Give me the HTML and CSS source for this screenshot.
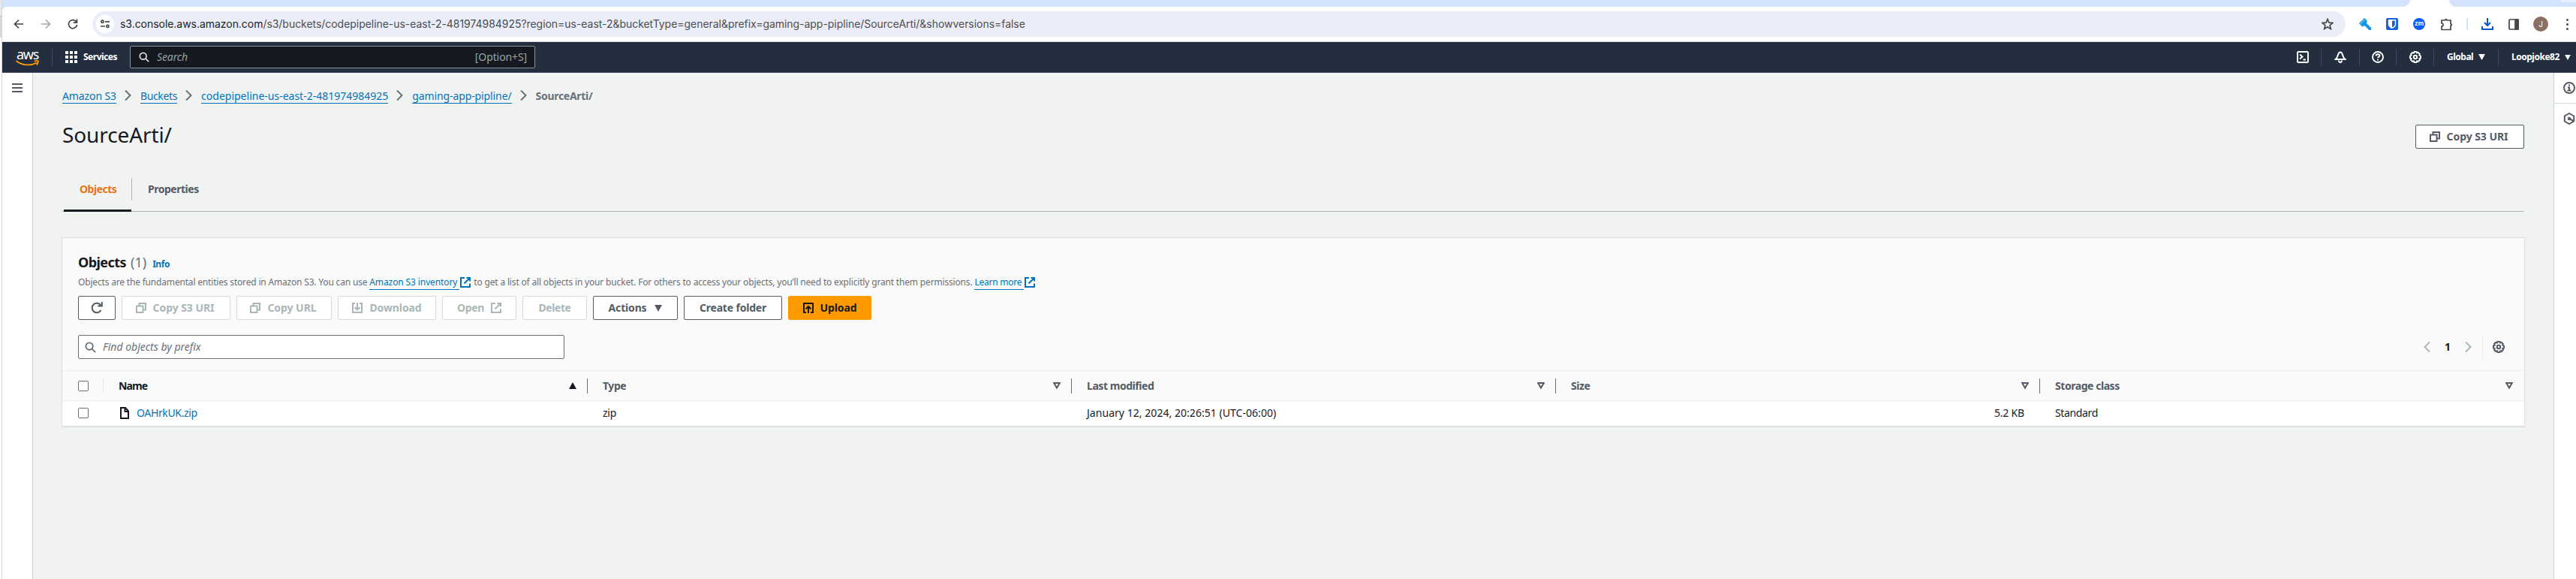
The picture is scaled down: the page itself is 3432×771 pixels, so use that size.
FILE: index.html
```html
<!DOCTYPE html>
<html lang="en">
<head>
<meta charset="utf-8">
<title>SourceArti/ - S3 bucket</title>
<link rel="stylesheet" href="styles.css">
</head>
<body>
<svg class="defs" aria-hidden="true">
  <symbol id="copy" viewBox="0 0 14 14"><path d="M1 4.500h8.500V13H1zM4.500 4V1H13v8.500h-3" /></symbol>
  <symbol id="ext" viewBox="0 0 14 14"><path d="M6 1H1v12h12V8.500M8.500 1H13v4.500M13 1 5.500 8.500" /></symbol>
  <symbol id="chev" viewBox="0 0 9 14"><path d="M1 .5 7.500 7 1 13.500" /></symbol>
  <symbol id="mag" viewBox="0 0 16 16"><circle cx="6.500" cy="6.500" r="5" /><path d="m10.300 10.300 4.700 4.700" /></symbol>
  <symbol id="gear" viewBox="0 0 16 16"><path d="M6.500 1h3l.5 1.500 1.700-.6 2.100 2.100-.6 1.500L15 6.500v3l-1.700.6.7 1.700-2.100 2.200-1.800-.7-.6 1.700h-3l-.6-1.700-1.700.7L2 11.800l.7-1.700L1 9.500v-3l1.700-.8L2 4.100 4.200 2l1.700.6z" /><circle cx="8" cy="8" r="2.200" /></symbol>
  <symbol id="tri" viewBox="0 0 10 9"><path d="M1.200 1h7.600L5 7.500z" /></symbol>
  <symbol id="down" viewBox="0 0 10 9"><path d="M0 0h10L5 9z" /></symbol>
</svg>
<div class="screen">
  <div class="edge"><i></i><b></b></div>
  <div class="window">
    <div class="tabstrip"><span class="strip-a"></span><span class="strip-b"><i></i></span></div>
    <div class="toolbar">
      <div class="history">
        <svg width="14" height="14" viewBox="0 0 14 14" class="ink"><path d="M13 7H1.500M7 1.500 1.500 7 7 12.500" /></svg>
        <svg width="14" height="14" viewBox="0 0 14 14" class="ink dim"><path d="M1 7h11.500M7 1.500 12.500 7 7 12.500" /></svg>
        <svg width="14" height="14" viewBox="0 0 14 14" class="ink"><path d="M12 4.500A5.600 5.600 0 1 0 12.600 8M12.500.5v4.700H7.800" /></svg>
      </div>
      <div class="omnibox">
        <span class="site"><svg width="12" height="12" viewBox="0 0 12 12" class="ink"><circle cx="2.500" cy="2.800" r="1.600" /><path d="M6 2.800h6M0 9h6" /><circle cx="9.500" cy="9" r="1.600" /></svg></span>
        <span class="url"><em>s3.console.aws.amazon.com</em>/s3/buckets/codepipeline-us-east-2-481974984925?region=us-east-2&amp;bucketType=general&amp;prefix=gaming-app-pipline/SourceArti/&amp;showversions=false</span>
        <svg class="ink star" width="16" height="16" viewBox="0 0 16 16"><path d="m8 1.500 1.900 4.600 5 .4-3.800 3.200 1.200 4.800L8 12l-4.300 2.500 1.200-4.800L1.100 6.500l5-.4z" /></svg>
      </div>
      <div class="extensions">
        <svg class="flat" width="16" height="16" viewBox="0 0 16 16"><path d="M7 0 0 7l4 4.500 3.500-1.200L13.500 16H16v-3L10 7.200 10.500 3z" fill="#1494f0" /><path d="m7 0-7 7 2 2.200L9 2z" fill="#4bb0dc" /></svg>
        <svg class="flat" width="16" height="16" viewBox="0 0 16 16"><rect width="16" height="16" rx="2" fill="#175ddc" /><path d="M2.800 2h10.400v6.500c0 2.600-2.700 4.600-5.200 5.600-2.500-1-5.200-3-5.200-5.600z" fill="#fff" /><path d="M8 3.500h3.700v5c0 1.600-1.800 3-3.700 3.900z" fill="#175ddc" /></svg>
        <span class="zm">zm</span>
        <svg width="17" height="17" viewBox="0 0 17 17" class="ink"><path d="M2 3h4.500a1.300 1.300 0 1 1 2.600 0H14v4.700a1.300 1.300 0 1 1 0 2.600V15.500H2V11a2 2 0 0 0 0-4z" /></svg>
        <i class="bar"></i>
        <svg width="16" height="16" viewBox="0 0 16 16" class="ink blue"><path d="M8 0v9.500M4 6l4 4 4-4M1 11v4h14v-4" /></svg>
        <svg width="14" height="15" viewBox="0 0 14 15" class="ink"><rect x="1" y="1" width="12" height="13" rx="1" /><path d="M9 1h4v13H9z" fill="#474747" /></svg>
        <span class="avatar">J</span>
        <span class="dots"><i></i><i></i><i></i></span>
      </div>
    </div>
    <div class="nav">
      <div class="logo"><span>aws</span><svg width="31" height="8" viewBox="0 0 31 8"><path d="M.5 1C8 7.500 20 8 28 3.500M24.500 1.500c3-.8 6-.8 5.300.5-.2 1.500-1 3.500-2 4.500" /></svg></div>
      <div class="services"><svg width="16" height="16" viewBox="0 0 16 16"><path d="M0 0h4v4H0zM6 0h4v4H6zM12 0h4v4h-4zM0 6h4v4H0zM6 6h4v4H6zM12 6h4v4h-4zM0 12h4v4H0zM6 12h4v4H6zM12 12h4v4h-4z" /></svg><span>Services</span></div>
      <div class="navsearch"><svg width="14" height="14"><use href="#mag" /></svg><span class="ph k10">Search</span><span class="key k10">[Option+S]</span></div>
      <div class="utils">
        <span class="u u1"><svg width="16" height="16" viewBox="0 0 16 16"><rect x="1" y="1" width="14" height="14" rx="1" /><path d="m4 4.500 3.500 3L4 10.500M8.500 11.500H12" /></svg></span>
        <span class="u u2"><svg width="16" height="16" viewBox="0 0 16 16"><path d="M1.500 11h13C11.500 8.500 12 7 11 5 10.500 3 9 1.500 8 1.500S5.500 3 5 5c-1 2-.5 3.500-3.500 6zM6 12.500C6 14 7 15 8 15s2-1 2-2.500" /></svg></span>
        <span class="u u3"><svg width="16" height="16" viewBox="0 0 16 16"><circle cx="8" cy="8" r="7" /><path d="M5.600 6.500C5.600 5 6.700 4.300 8 4.300s2.400.8 2.400 2C10.400 7.800 8 7.800 8 9.300M8 10.700v1.800" /></svg></span>
        <span class="u u4"><svg width="16" height="16"><use href="#gear" /></svg></span>
        <span class="u u5"><span>Global</span><svg width="9" height="8"><use href="#down" /></svg></span>
        <span class="u u6"><span>Loopjoke82</span><svg width="8" height="7"><use href="#down" /></svg></span>
      </div>
    </div>
    <div class="body">
      <div class="left"><i></i><i></i><i></i></div>
      <main>
        <div class="crumbs">
          <a class="k10">Amazon S3</a><svg><use href="#chev" /></svg><a class="k35">Buckets</a><svg><use href="#chev" /></svg><a>codepipeline-us-east-2-481974984925</a><svg><use href="#chev" /></svg><a class="k10">gaming-app-pipline/</a><svg><use href="#chev" /></svg><b class="k30">SourceArti/</b>
        </div>
        <div class="title"><h1 class="k10">SourceArti/</h1><button class="btn w145"><svg><use href="#copy" /></svg><span class="k05">Copy S3 URI</span></button></div>
        <div class="tabs"><span class="tab on">Objects</span><i></i><span class="tab">Properties</span></div>
        <section class="card">
          <div class="head">
            <div class="h2"><b class="k55">Objects</b><span class="count">(1)</span><a class="k40">Info</a></div>
            <p><span class="k18">Objects are the fundamental entities stored in Amazon S3. You can use</span><a class="x k10">Amazon S3 inventory</a><svg><use href="#ext" /></svg><span class="k17">to get a list of all objects in your bucket. For others to access your objects, you’ll need to explicitly grant them permissions.</span><a class="x k23">Learn more</a><svg><use href="#ext" /></svg></p>
            <div class="actions">
              <button class="btn w50"><svg class="refresh" viewBox="0 0 16 16"><path d="M13.500 11A6.300 6.300 0 1 1 13.500 5M14.800 0v5.500H9.300" /></svg></button>
              <button class="btn off w145"><svg><use href="#copy" /></svg><span class="k05">Copy S3 URI</span></button>
              <button class="btn off w127"><svg><use href="#copy" /></svg><span class="k05">Copy URL</span></button>
              <button class="btn off w131"><svg viewBox="0 0 14 14"><path d="M4 1H1v12h12V1h-3M7 0v9.500M3.500 6 7 9.500 10.500 6" /></svg><span class="k10">Download</span></button>
              <button class="btn off w99"><span class="k35">Open</span><svg><use href="#ext" /></svg></button>
              <button class="btn off w86"><span class="k40">Delete</span></button>
              <button class="btn w113"><span class="k17">Actions</span><svg class="caret"><use href="#down" /></svg></button>
              <button class="btn w131"><span class="k18">Create folder</span></button>
              <button class="btn primary w111"><svg viewBox="0 0 14 14"><path d="M4 13H1V1h12v12h-3M7 14V5M3.500 8.500 7 5l3.500 3.500" /></svg><span class="k10">Upload</span></button>
            </div>
            <div class="filter">
              <div class="input"><svg width="15" height="15"><use href="#mag" /></svg><span>Find objects by prefix</span></div>
              <div class="pages"><svg class="chev flip"><use href="#chev" /></svg><b>1</b><svg class="chev"><use href="#chev" /></svg><i></i><svg class="cog"><use href="#gear" /></svg></div>
            </div>
          </div>
          <div class="row th">
            <span class="cell cb"><i class="box"></i></span>
            <span class="cell name"><b>Name</b><svg class="up" viewBox="0 0 10 9"><path d="M0 9h10L5 0z" /></svg></span>
            <span class="cell"><b>Type</b><svg><use href="#tri" /></svg></span>
            <span class="cell"><b>Last modified</b><svg><use href="#tri" /></svg></span>
            <span class="cell"><b>Size</b><svg><use href="#tri" /></svg></span>
            <span class="cell"><b>Storage class</b><svg><use href="#tri" /></svg></span>
          </div>
          <div class="row td">
            <span class="cell cb"><i class="box"></i></span>
            <span class="cell"><svg class="file" viewBox="0 0 12 16"><path d="M1 1h6l4 4.500V15H1zM6.500 1v5H11" /></svg><a class="k35">OAHrkUK.zip</a></span>
            <span class="cell"><span class="k23">zip</span></span>
            <span class="cell"><span class="wide">January 12, 2024, 20:26:51 (UTC-06:00)</span></span>
            <span class="cell right"><span class="k18">5.2 KB</span></span>
            <span class="cell"><span class="k35">Standard</span></span>
          </div>
        </section>
      </main>
      <div class="rightp">
        <span class="r1"><svg width="16" height="16" viewBox="0 0 16 16"><circle cx="8" cy="8" r="7" /><path d="M8 3.500v2M6 7.500h2v4M5.500 11.500h5" /></svg></span>
        <span class="r2"><svg width="16" height="16" viewBox="0 0 16 16"><path d="m8 1 6.200 3.500v7L8 15l-6.200-3.500v-7z" /><circle cx="8" cy="8" r="1.300" /><path d="m8 8 5.500 3" /></svg></span>
      </div>
    </div>
  </div>
</div>
</body>
</html>
```
FILE: styles.css
```css
* { box-sizing: border-box; }
body { margin: 0; font-family: "Noto Sans", "Open Sans", sans-serif; font-size: 14px; line-height: 22px; color: #16191f; }
.defs { position: absolute; width: 0; height: 0; }
svg { display: block; flex: none; fill: none; stroke: currentColor; stroke-width: 2; }
.flat { stroke: none; }

/* tracking steps, in hundredths of a pixel */
.k05 { letter-spacing: -0.05px; }
.k10 { letter-spacing: -0.11px; }
.k17 { letter-spacing: -0.17px; }
.k18 { letter-spacing: -0.18px; }
.k23 { letter-spacing: -0.24px; }
.k30 { letter-spacing: -0.29px; }
.k35 { letter-spacing: -0.35px; }
.k40 { letter-spacing: -0.42px; }
.k55 { letter-spacing: -0.55px; }
.wide { letter-spacing: 0.04px; }

.screen { display: flex; width: 3432px; height: 771px; overflow: hidden; }
.edge { width: 3px; background: #fff; display: flex; flex-direction: column; border-right: 1px solid #d8d8d8; }
.edge i { height: 22px; background: #e9e9e9; border-bottom: 1px solid #bbb; }
.edge b { height: 28px; background: #d9d9d7; }
.window { flex: 1; display: flex; flex-direction: column; min-width: 0; background: #d3e3fd; }
.tabstrip { height: 9px; display: flex; justify-content: space-between; background: #fff; }
.strip-a { width: 3208px; background: #d3e3fd; border-bottom-right-radius: 9px; }
.strip-b { width: 169px; background: #d3e3fd; border-bottom-left-radius: 9px; display: flex; justify-content: flex-end; align-items: flex-start; }
.strip-b i { width: 20px; height: 3px; background: #e8f0fe; border-radius: 0 0 0 8px; }
.toolbar { height: 47px; border-bottom: 1px solid #d9dadc; border-top-left-radius: 6px; display: flex; align-items: center; background: #fff; }
.history { width: 120px; padding-left: 15px; display: flex; gap: 22px; }
.ink { color: #474747; stroke-width: 1.700; }
.ink.dim { color: #a8a8a8; }
.ink.blue { color: #0b57d0; stroke-width: 2; }
.omnibox { width: 3002px; height: 34px; border-radius: 17px; background: #ebeef8; display: flex; align-items: center; padding: 0 16px 0 5px; }
.site { width: 24px; height: 24px; border-radius: 50%; background: #fff; display: flex; align-items: center; justify-content: center; }
.url { margin-left: 8px; font-family: Inter, sans-serif; color: #4b4d50; white-space: nowrap; letter-spacing: -0.04px; }
.url em { font-style: normal; color: #1f2023; }
.star { margin-left: auto; }
.extensions { display: flex; align-items: center; padding-left: 18px; gap: 20px; }
.zm { width: 16px; height: 16px; border-radius: 50%; background: #0b5cff; color: #fff; font: bold 8px/15px Inter, sans-serif; text-align: center; }
.bar { width: 2px; height: 16px; background: #d3e3fd; margin: 0 -2px; }
.avatar { width: 20px; height: 20px; border-radius: 50%; background: #8d6e63; color: #fff; font: 10px/20px Inter, sans-serif; text-align: center; margin-left: -1px; }
.dots { display: grid; gap: 3px; margin-left: 4px; }
.dots i { width: 3px; height: 3px; border-radius: 50%; background: #474747; }

.nav { height: 41px; background: #232f3e; border-bottom: 1px solid #414d5c; display: flex; align-items: center; color: #fff; font-size: 12px; }
.logo { width: 66px; padding-left: 18px; }
.logo span { display: block; font-size: 18px; line-height: 22px; height: 19px; margin-top: -3px; letter-spacing: -1.3px; padding-left: 1px; }
.logo svg { stroke: #ff9900; stroke-width: 1.800; }
.services { width: 104px; height: 22px; border-left: 1px solid #414d5c; padding-left: 17px; display: flex; align-items: center; gap: 8px; font-weight: bold; letter-spacing: -0.5px; }
.services svg { fill: #fff; stroke: none; }
.navsearch { width: 540px; height: 30px; background: #16191f; border: 1px solid #879596; border-radius: 2px; padding: 0 10px 0 11px; display: flex; align-items: center; font-size: 14px; color: #95a5a6; }
.navsearch svg { color: #d5dbdb; }
.ph { font-style: italic; margin-left: 10px; }
.key { margin-left: auto; }
.utils { margin-left: auto; display: flex; font-weight: bold; letter-spacing: -0.49px; }
.u { height: 22px; display: flex; align-items: center; border-left: 1px solid #414d5c; padding-left: 17px; }
.u svg { stroke-width: 1.900; }
.u1 { border: 0; width: 32px; padding: 0; }
.u2 { width: 51px; }
.u3 { width: 49px; padding-left: 16px; }
.u4 { width: 50px; }
.u5 { width: 86px; gap: 7px; }
.u6 { width: 104px; gap: 7px; }
.u5 svg, .u6 svg { fill: #fff; stroke: none; }

.body { flex: 1; display: flex; background: #f1f3f3; }
.left { width: 41px; background: #fff; border-right: 1px solid #ccd1d1; padding: 14px 0 0 13px; display: flex; flex-direction: column; gap: 3px; }
.left i { width: 14px; height: 2px; background: #545b64; }
main { flex: 1; padding: 0 39px; min-width: 0; }
.crumbs { display: flex; align-items: center; height: 22px; margin-top: 19px; white-space: nowrap; }
.crumbs a { height: 22px; line-height: 23px; border-bottom: 1px solid #0073bb; }
.crumbs svg { width: 9px; height: 14px; margin: 0 12px 0 11px; color: #687078; }
.crumbs b { color: #687078; line-height: 23px; }
a { color: #0073bb; }
.title { display: flex; justify-content: space-between; align-items: center; height: 34px; margin-top: 27px; }
h1 { font-size: 28px; line-height: 29px; height: 34px; font-weight: 400; margin: 0; }
.btn { height: 32px; border: 1px solid #545b64; border-radius: 2px; background: #fff; color: #545b64; font: bold 14px/22px "Noto Sans", sans-serif; padding: 0; display: flex; align-items: center; justify-content: center; gap: 9px; white-space: nowrap; }
.btn svg { width: 14px; height: 14px; }
.off { color: #aab7b8; border-color: #d5dbdb; }
.primary { background: #ff9900; border-color: #ff9900; color: #16191f; }
.btn .caret { width: 10px; height: 9px; fill: currentColor; stroke: none; margin-left: 2px; }
.btn .refresh { width: 16px; height: 16px; }
.w50 { width: 50px; }
.w145 { width: 145px; padding-right: 3px; }
.w127 { width: 127px; padding-right: 2px; }
.w131 { width: 131px; }
.w99 { width: 99px; }
.w86 { width: 86px; }
.w113 { width: 113px; }
.w111 { width: 111px; }
.tabs { height: 62px; margin-top: 21px; border-bottom: 1px solid #aab7b8; display: flex; color: #545b64; font-weight: bold; letter-spacing: -0.48px; }
.tab { padding: 21px 21px 0; height: 62px; }
.tab.on { color: #ec7211; width: 90px; margin-left: 2px; border-bottom: 3px solid #16191f; }
.tabs i { width: 1px; height: 30px; background: #aab7b8; margin-top: 17px; }

.card { margin: 35px 0 0; width: 3280px; height: 250px; background: #fff; box-shadow: 0 0 1px 1px #dde1e1, 0 1px 1px #777f80; }
.head { height: 177px; background: #fafafa; border-bottom: 1px solid #eaeded; padding: 21px 21px 0; }
.h2 { height: 26px; display: flex; align-items: baseline; font-size: 18px; line-height: 22px; }
.count { color: #687078; margin-left: 6px; }
.h2 a { font-size: 12px; font-weight: bold; margin-left: 8px; }
p { display: flex; align-items: center; height: 20px; margin: 2px 0 8px; font-size: 12px; line-height: 18px; color: #687078; white-space: nowrap; }
p .x { border-bottom: 1px solid #0073bb; margin-left: 3px; padding-right: 3px; margin-bottom: -1px; }
p svg { width: 14px; height: 14px; color: #0073bb; margin: 0 4px 0 1px; }
.actions { display: flex; gap: 8px; }
.filter { display: flex; justify-content: space-between; margin-top: 20px; }
.input { width: 648px; height: 32px; background: #fff; border: 1px solid #687078; border-radius: 2px; display: flex; align-items: center; gap: 9px; padding-left: 8px; font-style: italic; color: #687078; }
.pages { display: flex; align-items: center; padding-right: 5px; }
.chev { width: 9px; height: 16px; color: #aab7b8; }
.flip { transform: scaleX(-1); }
.pages b { width: 46px; text-align: center; }
.pages i { width: 1px; height: 32px; background: #eaeded; margin: 0 13px 0 14px; }
.cog { width: 16px; height: 16px; color: #545b64; }
.row { display: flex; align-items: center; }
.th { height: 40px; background: #fafafa; border-bottom: 1px solid #eaeded; color: #545b64; letter-spacing: -0.45px; }
.td { height: 32px; }
.cell { width: 645px; height: 20px; display: flex; align-items: center; padding: 0 14px 0 20px; border-left: 1px solid transparent; white-space: nowrap; }
.th .cell { justify-content: space-between; border-left-color: #687078; }
.th .cell svg { width: 10px; height: 9px; }
.th .cell .up { fill: #16191f; stroke: none; }
.row .cb { width: 54px; border: 0; padding: 0 0 0 21px; }
.th .name { border-left-color: #eaeded; color: #16191f; letter-spacing: -0.9px; }
.box { width: 14px; height: 14px; border: 1px solid #687078; border-radius: 2px; background: #fff; }
.file { width: 12px; height: 16px; margin: 0 10px 0 2px; }
.right { justify-content: flex-end; padding-right: 20px; }
.rightp { width: 30px; background: #fff; border-left: 1px solid #ccd1d1; color: #545b64; }
.rightp span { display: block; padding: 12px 0 0 12px; }
.r1 { height: 41px; border-bottom: 1px solid #d5dbdb; }
```
